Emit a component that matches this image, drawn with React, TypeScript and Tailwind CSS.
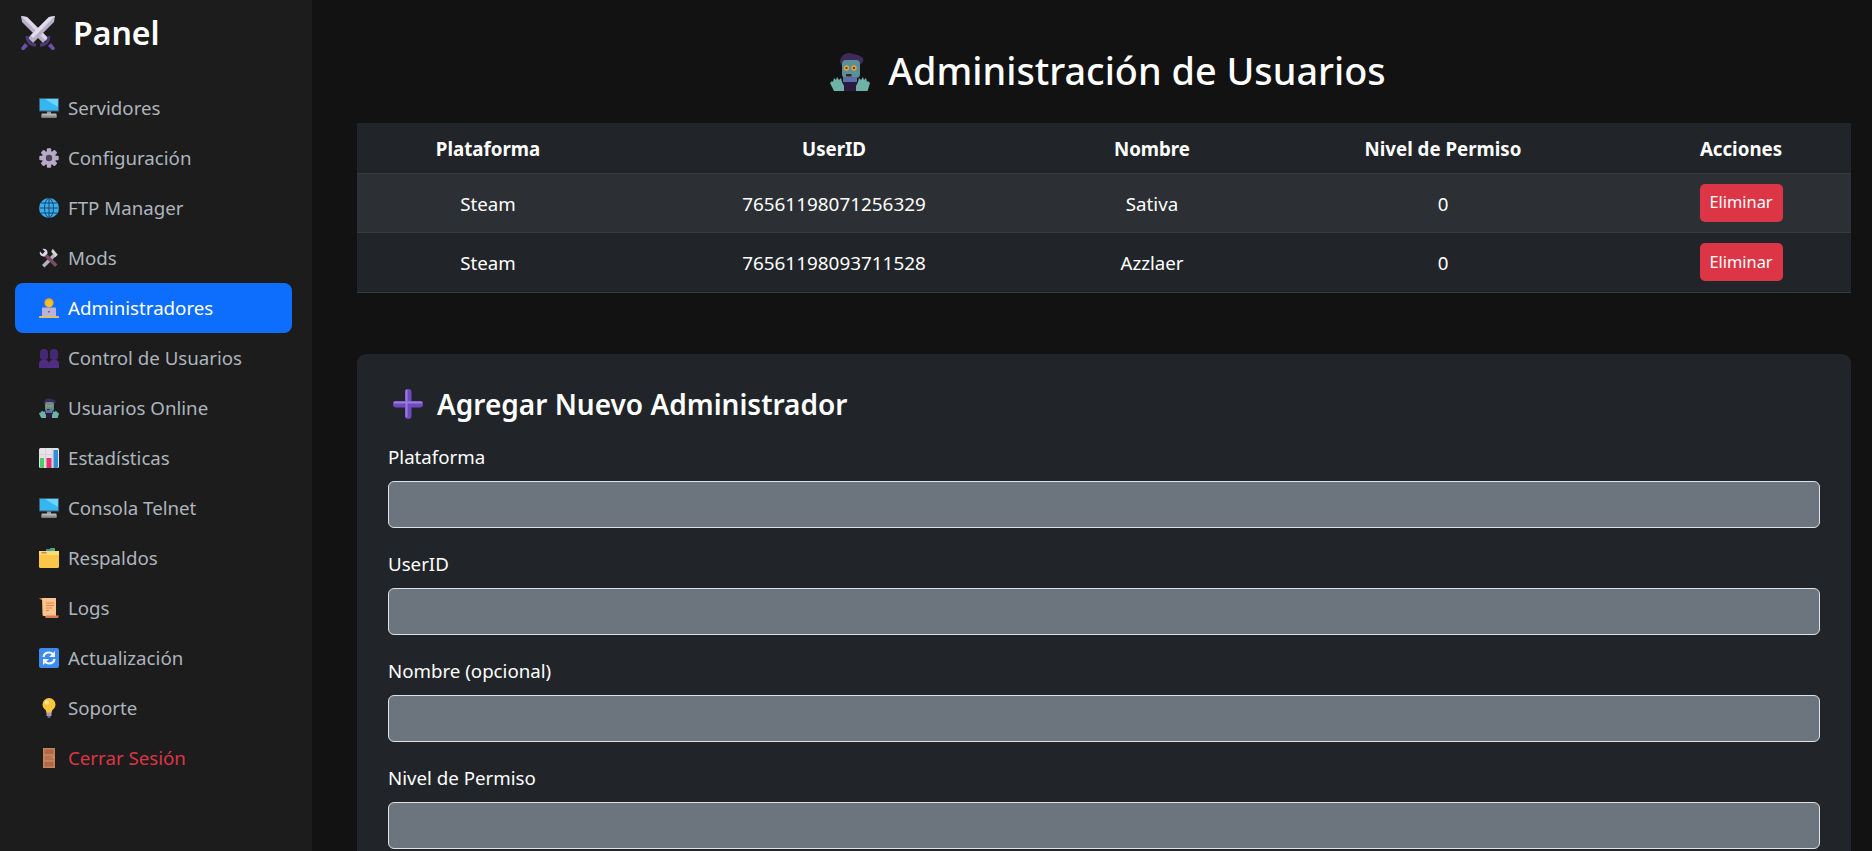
import React from 'react';

type IconProps = { className?: string };

// Emoji look-alikes, drawn by hand because no emoji font can be relied on
const Swords = ({ className }: IconProps) => (
  <svg viewBox="0 0 36 36" className={className}>
    <path d="M1 1l6 1 21 21-5 5L2 7z" fill="#b9afc9" />
    <path d="M1 1l6 1 21 21-2.500 2.500z" fill="#dcd6e6" />
    <path d="M35 1l-6 1L8 23l5 5L34 7z" fill="#b9afc9" />
    <path d="M35 1l-6 1L10.500 20.500l2.500 2.500z" fill="#e2dcec" />
    <g fill="none" stroke="#4f3a78" strokeWidth="3">
      <path d="M7 21c0 5 3 9 9 9" />
      <path d="M29 21c0 5-3 9-9 9" />
    </g>
    <path d="M1 33l4-5 3 3-4 4H2z" fill="#6d4fb0" />
    <path d="M35 33l-4-5-3 3 4 4h2z" fill="#6d4fb0" />
  </svg>
);

const Monitor = ({ className }: IconProps) => (
  <svg viewBox="0 0 20 20" className={className}>
    <rect x="0" y="0" width="20" height="13.500" rx="0.800" fill="#3f5f78" />
    <path d="M1 1h18v11.500H1z" fill="#35b6f2" />
    <path d="M6 1h13v8z" fill="#6fd2f8" />
    <path d="M8 13.500h4V16H8z" fill="#9b9b9b" />
    <rect x="2.500" y="15.500" width="15" height="4" rx="0.500" fill="#b5b5b5" />
    <path d="M2.500 17.500h15v2h-15z" fill="#8f8f8f" />
  </svg>
);

const Gear = ({ className }: IconProps) => (
  <svg viewBox="0 0 20 20" className={className}>
    <g fill="#b7aac8">
      <circle cx="10" cy="10" r="7" />
      <rect x="7.800" y="0.300" width="4.400" height="19.400" rx="1" />
      <rect x="7.800" y="0.300" width="4.400" height="19.400" rx="1" transform="rotate(45 10 10)" />
      <rect x="7.800" y="0.300" width="4.400" height="19.400" rx="1" transform="rotate(90 10 10)" />
      <rect x="7.800" y="0.300" width="4.400" height="19.400" rx="1" transform="rotate(135 10 10)" />
    </g>
    <circle cx="10" cy="10" r="3.200" fill="#4b4453" />
  </svg>
);

const Globe = ({ className }: IconProps) => (
  <svg viewBox="0 0 20 20" className={className}>
    <circle cx="10" cy="10" r="10" fill="#35aef0" />
    <g fill="none" stroke="#1b3a5e" strokeWidth="0.900">
      <ellipse cx="10" cy="10" rx="4.500" ry="9.500" />
      <path d="M10 .5v19M.5 10h19M2 5h16M2 15h16" />
    </g>
  </svg>
);

const Tools = ({ className }: IconProps) => (
  <svg viewBox="0 0 20 20" className={className}>
    <path d="M3 17L14 6l2.500 2.500L5.500 19.500z" fill="#b5b0bd" />
    <path d="M13 1l6 5-2 3-5-5z" fill="#d8d4de" transform="rotate(10 15 5)" />
    <path d="M5 8l11 11 2.500-2.500L8 6z" fill="#7b4a63" />
    <path d="M1 3.500L3.500 6 6 3.500 3.500 1C6 0 9 2 8.500 5.500L5.500 8.500C2 9 0 6 1 3.500z" fill="#dcd8e2" />
  </svg>
);

const Technologist = ({ className }: IconProps) => (
  <svg viewBox="0 0 20 20" className={className}>
    <circle cx="10" cy="4.800" r="4.600" fill="#f2a91f" />
    <circle cx="10" cy="5.600" r="3.400" fill="#f4c033" />
    <rect x="3" y="9.500" width="14" height="9" rx="0.800" fill="#bcb1d8" />
    <rect x="9" y="13" width="2" height="1.500" fill="#6f6690" />
    <rect x="0" y="18" width="20" height="2" rx="0.500" fill="#e0bd6a" />
  </svg>
);

const Busts = ({ className }: IconProps) => (
  <svg viewBox="0 0 20 20" className={className}>
    <g fill="#452873">
      <rect x="1" y="1" width="8" height="11" rx="3.500" />
      <rect x="11" y="1" width="8" height="11" rx="3.500" />
    </g>
    <g fill="#4f2e82">
      <path d="M0 20v-4c0-2.500 1.500-4 3.500-4h3c2 0 3.500 1.500 3.500 4v4z" />
      <path d="M10 20v-4c0-2.500 1.500-4 3.500-4h3c2 0 3.500 1.500 3.500 4v4z" />
    </g>
  </svg>
);

const Zombie = ({ className }: IconProps) => (
  <svg viewBox="0 0 40 38" className={className}>
    <path d="M10 9c0-5 4-9 9-9 3 1 10 1 14 5 1 2 0 5-2 6l-3-1-15-1-1 4z" fill="#3e2a5c" />
    <rect x="12" y="7" width="18" height="18" rx="4" fill="#5b8f98" />
    <circle cx="16.500" cy="15" r="2.700" fill="#e9a33a" />
    <circle cx="24" cy="15" r="2.700" fill="#e9a33a" />
    <circle cx="16.500" cy="15" r="1.100" fill="#3b2a30" />
    <circle cx="24" cy="15" r="1.100" fill="#3b2a30" />
    <rect x="16" y="21" width="5.500" height="2.500" fill="#3a2320" />
    <rect x="13" y="24" width="14" height="5" fill="#5a6ea8" />
    <rect x="13" y="29" width="14" height="9" fill="#2b1b3f" />
    <g fill="#6fb3a8">
      <path d="M0 30l2-2 1 1 1-4 2 2 1-3 2 3 2-2 1 4 2 4v7H5z" />
      <path d="M40 30l-2-2-1 1-1-4-2 2-1-3-2 3-2-2-1 4-2 4v7h11z" />
    </g>
  </svg>
);

const BarChart = ({ className }: IconProps) => (
  <svg viewBox="0 0 20 20" className={className}>
    <rect width="20" height="20" rx="1.500" fill="#e5e3e8" />
    <path d="M0 6.600h20M0 13.300h20M6.600 0v20M13.300 0v20" stroke="#c7c5cc" strokeWidth="0.500" />
    <path d="M1 10h4v10H2.500Q1 20 1 18.500z" fill="#4dcb68" />
    <rect x="7.500" y="10" width="5" height="10" fill="#e7316f" />
    <path d="M14.500 2H19v16.500Q19 20 17.500 20h-3z" fill="#2f8ed8" />
  </svg>
);

const Folder = ({ className }: IconProps) => (
  <svg viewBox="0 0 20 20" className={className}>
    <rect x="11" y="0" width="5" height="3" rx="0.500" fill="#3fb56b" />
    <rect x="7" y="1" width="5" height="3" rx="0.500" fill="#4a86c8" />
    <path d="M0 3h20v15.500q0 1.500-1.500 1.500h-17Q0 20 0 18.500z" fill="#fbc64a" />
    <path d="M0 3h20v4H0z" fill="#fddb78" />
    <rect x="2.500" y="4" width="5" height="1.500" fill="#e8744a" />
  </svg>
);

const Scroll = ({ className }: IconProps) => (
  <svg viewBox="0 0 20 20" className={className}>
    <path d="M0 0h4v2H2z" fill="#c8663f" />
    <path d="M3 0h14v18H5q-1.500 0-1.500-1.500z" fill="#fbc48c" />
    <path d="M6 19q0-1.500 1.500-1.500H20L19 20H7z" fill="#d87859" />
    <path d="M7 5h8M7 7.500h8M7 10h6M7 12.500h3" stroke="#e8834f" strokeWidth="1" />
  </svg>
);

const Refresh = ({ className }: IconProps) => (
  <svg viewBox="0 0 20 20" className={className}>
    <rect width="20" height="20" rx="2" fill="#3d8bf0" />
    <g fill="none" stroke="#f2f5fb" strokeWidth="2.200">
      <path d="M4.500 9C5 6 7 4.500 10 4.500c1.800 0 3 .7 4 1.800" />
      <path d="M15.500 11c-.5 3-2.500 4.500-5.500 4.500-1.800 0-3-.7-4-1.800" />
    </g>
    <path d="M16 3v6h-6zM4 17v-6h6z" fill="#f2f5fb" />
  </svg>
);

const Bulb = ({ className }: IconProps) => (
  <svg viewBox="0 0 20 20" className={className}>
    <circle cx="10" cy="6.500" r="6.500" fill="#fcc43d" />
    <path d="M6.500 11h7L12.500 15h-5z" fill="#fcc43d" />
    <circle cx="8" cy="4.500" r="2.200" fill="#ffe58a" />
    <rect x="7.500" y="14.500" width="5" height="3.500" rx="0.500" fill="#a89bb5" />
    <rect x="8.500" y="18" width="3" height="2" rx="0.500" fill="#6e5f80" />
  </svg>
);

const Door = ({ className }: IconProps) => (
  <svg viewBox="0 0 20 20" className={className}>
    <rect x="4" y="0" width="12" height="20" fill="#c8825a" />
    <rect x="5.500" y="1.500" width="9" height="4.500" fill="#a9694a" />
    <rect x="5.500" y="8" width="9" height="4" fill="#b87450" />
    <rect x="5.500" y="14" width="9" height="4.500" fill="#a9694a" />
    <rect x="13.500" y="8.500" width="2" height="1.500" fill="#e8a25a" />
  </svg>
);

const Plus = ({ className }: IconProps) => (
  <svg viewBox="0 0 30 30" className={className}>
    <rect x="12" y="0" width="6.500" height="30" rx="3.200" fill="#7048c4" />
    <rect x="0" y="12" width="30" height="6.500" rx="3.200" fill="#7048c4" />
    <rect x="0.500" y="12.500" width="29" height="2" rx="1" fill="#9a7fd6" />
    <rect x="12.500" y="0.500" width="2" height="28" rx="1" fill="#9a7fd6" />
  </svg>
);

const navItems = [
  { label: 'Servidores', icon: Monitor },
  { label: 'Configuración', icon: Gear },
  { label: 'FTP Manager', icon: Globe },
  { label: 'Mods', icon: Tools },
  { label: 'Administradores', icon: Technologist, active: true },
  { label: 'Control de Usuarios', icon: Busts },
  { label: 'Usuarios Online', icon: Zombie },
  { label: 'Estadísticas', icon: BarChart },
  { label: 'Consola Telnet', icon: Monitor },
  { label: 'Respaldos', icon: Folder },
  { label: 'Logs', icon: Scroll },
  { label: 'Actualización', icon: Refresh },
  { label: 'Soporte', icon: Bulb },
  { label: 'Cerrar Sesión', icon: Door, danger: true },
];

const admins = [
  { platform: 'Steam', userId: '76561198071256329', name: 'Sativa', level: 0 },
  { platform: 'Steam', userId: '76561198093711528', name: 'Azzlaer', level: 0 },
];

const fields = ['Plataforma', 'UserID', 'Nombre (opcional)', 'Nivel de Permiso'];

export default function App() {
  return (
    <div className="flex h-screen overflow-hidden bg-[#121212] text-[18.7px] text-white font-['Noto_Sans','Open_Sans',sans-serif]">
      {/* Sidebar */}
      <aside className="w-[312px] shrink-0 bg-[#1c1c1c] pl-[15px] pr-[20px]">
        <div className="flex h-[83px] items-start pl-[5px] pt-[15px]">
          <Swords className="h-[36px] w-[36px]" />
          <span className="ml-[17px] text-[32px] leading-[36px] font-semibold">Panel</span>
        </div>
        <nav className="flex flex-col">
          {navItems.map((item) => {
            const Icon = item.icon;
            return (
              <a
                key={item.label}
                className={`flex h-[50px] items-center rounded-[8px] pl-[24px] ${
                  item.active ? 'bg-[#0d6efd] text-white' : item.danger ? 'text-[#dc3545]' : 'text-[#adb5bd]'
                }`}
              >
                <Icon className="h-[20px] w-[20px]" />
                <span className="ml-[9px] pt-[1px]">{item.label}</span>
              </a>
            );
          })}
        </nav>
      </aside>

      {/* Main */}
      <main className="flex-1 pl-[45px] pr-[21px]">
        <h1 className="flex h-[123px] items-center justify-center pl-[8px] pt-[20px] text-[37.8px] font-medium">
          <Zombie className="h-[38px] w-[40px]" />
          <span className="ml-[18px]">Administración de Usuarios</span>
        </h1>

        <table className="w-[1494px] table-fixed bg-[#212529] text-center">
          <colgroup>
            <col className="w-[262px]" />
            <col className="w-[430px]" />
            <col className="w-[206px]" />
            <col className="w-[376px]" />
            <col className="w-[220px]" />
          </colgroup>
          <thead>
            <tr className="h-[50px] border-b border-[#373b3e] font-bold">
              <th className="pt-[2px]">Plataforma</th>
              <th className="pt-[2px]">UserID</th>
              <th className="pt-[2px]">Nombre</th>
              <th className="pt-[2px]">Nivel de Permiso</th>
              <th className="pt-[2px]">Acciones</th>
            </tr>
          </thead>
          <tbody>
            {admins.map((admin, i) => (
              <tr key={admin.userId} className={`border-b border-[#373b3e] ${i === 0 ? 'h-[59px] bg-[#2c3034]' : 'h-[60px]'}`}>
                <td className="pt-[3px]">{admin.platform}</td>
                <td className="pt-[3px] text-[18.9px]">{admin.userId}</td>
                <td className="pt-[3px]">{admin.name}</td>
                <td className="pt-[3px]">{admin.level}</td>
                <td>
                  <button className="h-[38px] w-[83px] rounded-[5px] bg-[#dc3545] text-[16.4px] text-white">Eliminar</button>
                </td>
              </tr>
            ))}
          </tbody>
        </table>

        <section className="mt-[61px] rounded-[9px] bg-[#212529] px-[31px] pb-[30px] pt-[28px]">
          <h2 className="mb-[16px] flex h-[44px] items-center pl-[5px] text-[28px] font-semibold">
            <Plus className="h-[30px] w-[30px]" />
            <span className="ml-[14px]">Agregar Nuevo Administrador</span>
          </h2>
          {fields.map((label) => (
            <div key={label} className="mb-[21px]">
              <label className="block h-[29px] leading-[29px]">{label}</label>
              <input className="mt-[10px] block h-[47px] w-full rounded-[6px] border border-[#dee2e6] bg-[#6c757d]" />
            </div>
          ))}
        </section>
      </main>
    </div>
  );
}
